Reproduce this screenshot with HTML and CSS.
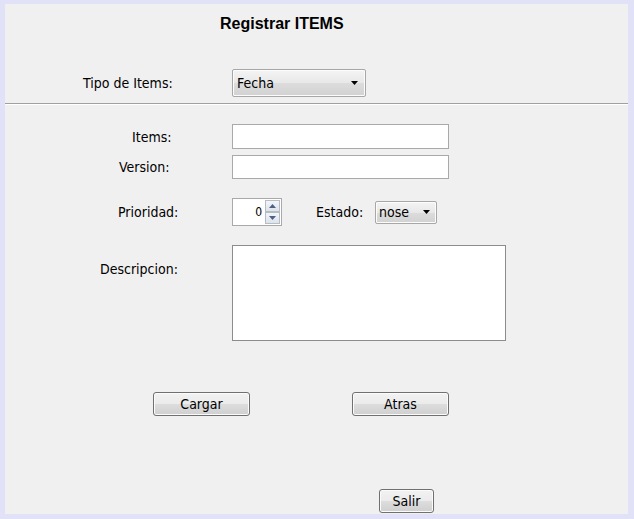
FILE: index.html
```html
<!DOCTYPE html>
<html lang="es">
<head>
<meta charset="utf-8">
<title>Registrar ITEMS</title>
<link rel="stylesheet" href="styles.css">
</head>
<body>
<div class="frame">
  <div class="title">Registrar ITEMS</div>

  <div class="row row-tipo">
    <span class="lbl lbl-tipo">Tipo de Items:</span>
    <div class="combo combo-tipo">
      <span class="combo-text">Fecha</span>
      <svg class="arrow" width="7" height="4" viewBox="0 0 7 4"><path d="M0 0H7L3.5 4Z" fill="#000"/></svg>
    </div>
  </div>

  <div class="sep"></div>

  <div class="row row-items">
    <span class="lbl lbl-items">Items:</span>
    <div class="field field-text"></div>
  </div>

  <div class="row row-version">
    <span class="lbl lbl-version">Version:</span>
    <div class="field field-text field-version"></div>
  </div>

  <div class="row row-prio">
    <span class="lbl lbl-prio">Prioridad:</span>
    <div class="spinner">
      <span class="spin-value">0</span>
      <div class="spin-btns">
        <div class="spin-btn">
          <svg width="7" height="4" viewBox="0 0 7 4"><path d="M0 4H7L3.5 0Z" fill="#4d6185"/></svg>
        </div>
        <div class="spin-btn">
          <svg width="7" height="4" viewBox="0 0 7 4"><path d="M0 0H7L3.5 4Z" fill="#4d6185"/></svg>
        </div>
      </div>
    </div>
    <span class="lbl-estado">Estado:</span>
    <div class="combo combo-estado">
      <span class="combo-text">nose</span>
      <svg class="arrow" width="7" height="4" viewBox="0 0 7 4"><path d="M0 0H7L3.5 4Z" fill="#000"/></svg>
    </div>
  </div>

  <div class="row row-desc">
    <span class="lbl lbl-desc">Descripcion:</span>
    <div class="field field-area"></div>
  </div>

  <div class="row row-buttons">
    <div class="btn btn-wide btn-cargar">Cargar</div>
    <div class="btn btn-wide btn-atras">Atras</div>
  </div>

  <div class="row row-salir">
    <div class="btn btn-salir">Salir</div>
  </div>
</div>
</body>
</html>
```

FILE: styles.css
```css
html, body {
  margin: 0;
  padding: 0;
  background: #e1e1f8;
}

body {
  font-family: "DejaVu Sans Condensed", "DejaVu Sans", sans-serif;
  font-size: 14px;
  color: #000;
}

.frame {
  margin: 4px 6px 5px 5px;
  height: 510px;
  background: #f0f0f0;
  display: flex;
  flex-direction: column;
  overflow: hidden;
}

.title {
  margin-top: 11px;
  height: 18px;
  line-height: 18px;
  padding-left: 215px;
  font-family: "Liberation Sans", Arial, sans-serif;
  font-weight: bold;
  font-size: 16px;
}

.row {
  display: flex;
  align-items: center;
}

.lbl {
  box-sizing: border-box;
  width: 227px;
  flex: none;
  line-height: 18px;
}

.lbl-tipo { padding-left: 78px; }
.lbl-items { padding-left: 127px; }
.lbl-version { padding-left: 114px; }
.lbl-prio { padding-left: 113px; }
.lbl-desc { padding-left: 95px; align-self: flex-start; margin-top: 15px; }

.row-tipo { margin-top: 36px; height: 28px; }

.combo {
  box-sizing: border-box;
  display: flex;
  align-items: center;
  justify-content: space-between;
  border: 1px solid #a7a7a7;
  box-shadow: inset 0 0 0 1px #fcfcfc;
  background: linear-gradient(#f4f4f4, #e8e8e8 50%, #dcdcdc 51%, #d2d2d2);
  border-radius: 2px;
}

.combo-tipo {
  width: 134px;
  height: 28px;
  padding: 0 7px 0 4px;
}

.combo-estado {
  width: 62px;
  height: 23px;
  padding: 0 6px 0 3px;
}

.combo-text { line-height: 18px; }

.sep {
  margin-top: 6px;
  height: 0;
  border-top: 1px solid #a0a0a0;
  border-bottom: 1px solid #ffffff;
}

.row-items { margin-top: 19px; height: 25px; }
.row-version { margin-top: 6px; height: 24px; }

.field {
  box-sizing: border-box;
  background: #fff;
}

.field-text {
  width: 217px;
  height: 25px;
  border: 1px solid #a9a9a9;
}

.field-version { height: 24px; }

.row-prio { margin-top: 19px; height: 28px; }

.spinner {
  box-sizing: border-box;
  width: 50px;
  height: 28px;
  border: 1px solid #a9a9a9;
  background: #fff;
  display: flex;
  align-items: center;
  justify-content: flex-end;
  padding: 1px;
  flex: none;
}

.spin-value {
  font-size: 12px;
  line-height: 14px;
  margin-right: 3px;
}

.spin-btns {
  display: flex;
  flex-direction: column;
  height: 24px;
  width: 15px;
}

.spin-btn {
  box-sizing: border-box;
  flex: 1;
  display: flex;
  align-items: center;
  justify-content: center;
  border: 1px solid #b6bcc6;
  background: linear-gradient(#f3f5f8, #dde3ea);
}

.lbl-estado {
  margin-left: 34px;
  width: 59px;
  flex: none;
  line-height: 18px;
}

.row-desc { margin-top: 19px; height: 96px; align-items: flex-start; }

.field-area {
  width: 274px;
  height: 96px;
  border: 1px solid #8a8c90;
}

.row-buttons { margin-top: 51px; height: 24px; padding-left: 148px; }

.btn {
  box-sizing: border-box;
  height: 24px;
  border: 1px solid #707070;
  border-radius: 3px;
  box-shadow: inset 0 0 0 1px #fbfbfb;
  background: linear-gradient(#f2f2f2, #ebebeb 50%, #dddddd 51%, #cfcfcf);
  display: flex;
  align-items: center;
  justify-content: center;
  line-height: 18px;
  flex: none;
}

.btn-wide { width: 97px; }
.btn-atras { margin-left: 102px; }

.row-salir { margin-top: 73px; height: 24px; padding-left: 374px; }
.btn-salir { width: 55px; }
```
